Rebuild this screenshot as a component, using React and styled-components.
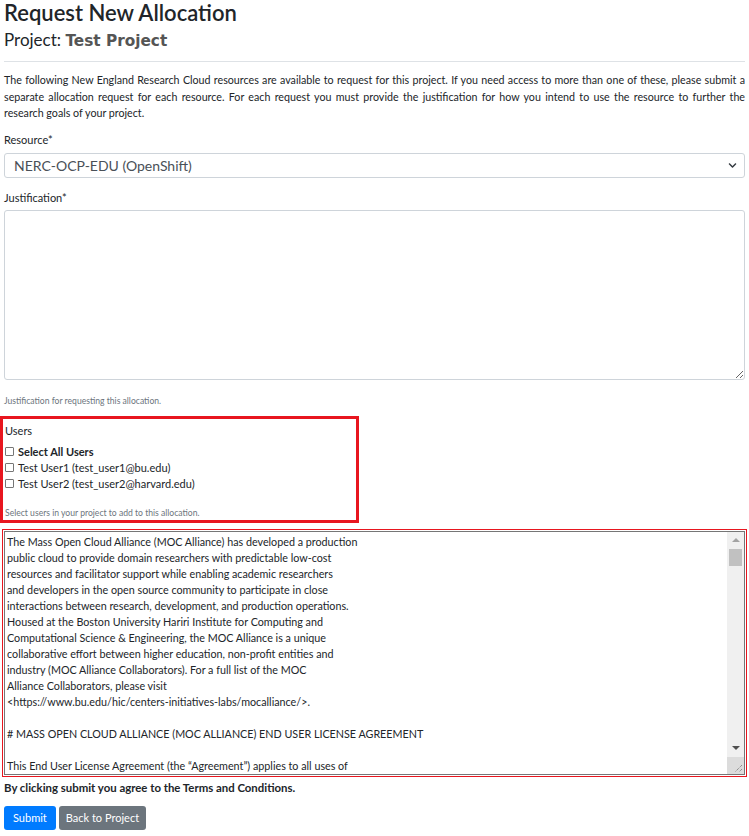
import React from 'react';
import styled, { createGlobalStyle } from 'styled-components';
import { FaChevronDown } from 'react-icons/fa';

const GlobalStyle = createGlobalStyle`
  html, body {
    margin: 0;
    padding: 0;
    background: #fff;
  }
  body {
    font-family: Lato, "Open Sans", sans-serif;
    color: #212529;
  }
`;

const Page = styled.div`
  padding: 0 4px 6px 4px;
  font-size: 11px;
`;

const Title = styled.h1`
  margin: 0;
  font-size: 22px;
  font-weight: 600;
  line-height: 26px;
`;

const SubTitle = styled.h2`
  margin: 3px 0 0 0;
  font-size: 17px;
  font-weight: 400;
  line-height: 22px;
`;

const ProjectName = styled.span`
  font-family: "DejaVu Sans", Verdana, sans-serif;
  font-size: 15.3px;
  color: #555;
  font-weight: 600;
`;

const Rule = styled.hr`
  margin: 9px 0 10px 0;
  border: 0;
  border-top: 1px solid #dee2e6;
`;

const Intro = styled.p`
  margin: 0;
  font-size: 10.7px;
  line-height: 16.5px;
  text-align: justify;
`;

const Label = styled.div`
  font-size: 11px;
  line-height: 16px;
  margin: ${p => p.$mt || 0}px 0 ${p => p.$mb ?? 5}px 0;
`;

const SelectWrap = styled.div`
  position: relative;
`;

const Select = styled.select`
  appearance: none;
  display: block;
  width: 100%;
  height: 25px;
  border: 1px solid #ced4da;
  border-radius: 3px;
  background: #fff;
  color: #495057;
  font-family: inherit;
  font-size: 14px;
  padding: 0 9px;
`;

const Chevron = styled.span`
  position: absolute;
  right: 8px;
  top: 8px;
  color: #343a40;
  font-size: 9px;
  pointer-events: none;
  display: flex;
`;

const Justification = styled.textarea`
  display: block;
  box-sizing: border-box;
  width: 100%;
  height: 170px;
  border: 1px solid #ced4da;
  border-radius: 3px;
  font-family: inherit;
  font-size: 12px;
  resize: vertical;
`;

const Help = styled.div`
  font-size: 8.6px;
  color: #6c757d;
  line-height: 12px;
  margin-top: ${p => p.$mt || 0}px;
`;

const UsersBox = styled.div`
  margin: 9px 0 0 -4px;
  width: 359px;
  box-sizing: border-box;
  border: 3px solid #e8161f;
  padding: 4px 4px 1px 2px;
`;

const CheckRow = styled.label`
  display: flex;
  align-items: center;
  gap: 4px;
  height: 16px;
  font-size: 11px;
  font-weight: ${p => (p.$bold ? 700 : 400)};
`;

const Check = styled.input.attrs({ type: 'checkbox' })`
  appearance: none;
  margin: 0;
  width: 9px;
  height: 9px;
  border: 1px solid #767676;
  border-radius: 1px;
  background: #fff;
`;

const AgreementFrame = styled.div`
  margin: 6px -2px 0 -2px;
  border: 1px solid #e8161f;
  padding: 1px;
`;

const AgreementBox = styled.div`
  position: relative;
  border: 1px solid #767676;
  height: 244px;
  box-sizing: border-box;
`;

const Agreement = styled.textarea`
  display: block;
  box-sizing: border-box;
  width: 100%;
  height: 100%;
  border: 0;
  margin: 0;
  padding: 2px 20px 2px 2px;
  font-family: inherit;
  font-size: 10.75px;
  line-height: 16px;
  color: #212529;
  resize: none;
  overflow-y: scroll;
  overflow-x: hidden;
  white-space: pre;
  scrollbar-width: none;
  outline: none;

  &::-webkit-scrollbar {
    display: none;
  }
`;

const ScrollBar = styled.div`
  position: absolute;
  top: 0;
  right: 0;
  bottom: 0;
  width: 17px;
  background: #f0f0f0;
  display: flex;
  flex-direction: column;
  pointer-events: none;
`;

const ArrowButton = styled.div`
  height: 17px;
  display: flex;
  align-items: center;
  justify-content: center;
`;

const Triangle = styled.span`
  width: 0;
  height: 0;
  border-left: 4px solid transparent;
  border-right: 4px solid transparent;
  ${p =>
    p.$dir === 'up'
      ? `border-bottom: 4px solid ${p.$color};`
      : `border-top: 4px solid ${p.$color};`}
`;

const Track = styled.div`
  flex: 1;
  padding: 0 2px;
`;

const Thumb = styled.div`
  height: 17px;
  background: #c1c1c1;
`;

const Corner = styled.div`
  height: 17px;
  background: #dcdcdc;
  display: flex;
  align-items: flex-end;
  justify-content: flex-end;
`;

const Terms = styled.div`
  margin-top: 3px;
  font-size: 11.4px;
  font-weight: 700;
  line-height: 16px;
`;

const Actions = styled.div`
  display: flex;
  gap: 3px;
  margin-top: 10px;
`;

const Button = styled.button`
  height: 24px;
  padding: 0 ${p => (p.$variant === 'secondary' ? 7 : 9)}px;
  border: 0;
  border-radius: 3px;
  font-family: inherit;
  font-size: 11px;
  color: #fff;
  background: ${p => (p.$variant === 'secondary' ? '#6c757d' : '#007bff')};
`;

const licenseHead = `The Mass Open Cloud Alliance (MOC Alliance) has developed a production
public cloud to provide domain researchers with predictable low-cost
resources and facilitator support while enabling academic researchers
and developers in the open source community to participate in close
interactions between research, development, and production operations.
Housed at the Boston University Hariri Institute for Computing and
Computational Science & Engineering, the MOC Alliance is a unique
collaborative effort between higher education, non-profit entities and
industry (MOC Alliance Collaborators). For a full list of the MOC
Alliance Collaborators, please visit
<https://www.bu.edu/hic/centers-initiatives-labs/mocalliance/>.

# MASS OPEN CLOUD ALLIANCE (MOC ALLIANCE) END USER LICENSE AGREEMENT

This End User License Agreement (the “Agreement”) applies to all uses of
the MOC Alliance production cloud services and resources (the
“Services”) by you (“User”). By accessing or using the Services, User
agrees to be bound by the terms of this Agreement.
`;

const licenseSections = [
  'ELIGIBILITY',
  'ACCEPTABLE USE',
  'ACCOUNTS AND SECURITY',
  'DATA AND PRIVACY',
  'RESOURCE ALLOCATIONS',
  'INTELLECTUAL PROPERTY',
  'DISCLAIMER OF WARRANTIES',
  'LIMITATION OF LIABILITY',
  'TERMINATION',
  'CHANGES TO THIS AGREEMENT',
  'GOVERNING LAW',
  'CONTACT',
];

const licenseText =
  licenseHead +
  licenseSections
    .map(
      (name, i) => `
## ${i + 1}. ${name}

User shall use the Services only in accordance with this Agreement and
all applicable laws, regulations and institutional policies. The MOC
Alliance may update the policies governing the Services from time to
time, and continued use of the Services after any such update
constitutes acceptance of the revised policies. User is responsible for
all activity that occurs under User's account and for ensuring that any
collaborators added to an allocation also comply with this Agreement.
`
    )
    .join('');

export default function App() {
  return (
    <Page>
      <GlobalStyle />
      <Title>Request New Allocation</Title>
      <SubTitle>
        Project: <ProjectName>Test Project</ProjectName>
      </SubTitle>
      <Rule />
      <Intro>
        The following New England Research Cloud resources are available to request for this
        project. If you need access to more than one of these, please submit a separate
        allocation request for each resource. For each request you must provide the
        justification for how you intend to use the resource to further the research goals of
        your project.
      </Intro>

      <Label $mt={10} $mb={5}>Resource*</Label>
      <SelectWrap>
        <Select defaultValue="nerc-ocp-edu">
          <option value="nerc-ocp-edu">NERC-OCP-EDU (OpenShift)</option>
        </Select>
        <Chevron>
          <FaChevronDown />
        </Chevron>
      </SelectWrap>

      <Label $mt={12} $mb={4}>Justification*</Label>
      <Justification />
      <Help $mt={15}>Justification for requesting this allocation.</Help>

      <UsersBox>
        <Label>Users</Label>
        <CheckRow $bold>
          <Check />
          Select All Users
        </CheckRow>
        <CheckRow>
          <Check />
          Test User1 (test_user1@bu.edu)
        </CheckRow>
        <CheckRow>
          <Check />
          Test User2 (test_user2@harvard.edu)
        </CheckRow>
        <Help $mt={15}>Select users in your project to add to this allocation.</Help>
      </UsersBox>

      <AgreementFrame>
        <AgreementBox>
          <Agreement readOnly defaultValue={licenseText} />
          <ScrollBar>
            <ArrowButton>
              <Triangle $dir="up" $color="#a3a3a3" />
            </ArrowButton>
            <Track>
              <Thumb />
            </Track>
            <ArrowButton>
              <Triangle $dir="down" $color="#505050" />
            </ArrowButton>
            <Corner>
              <svg width="17" height="17" viewBox="0 0 17 17">
                <path d="M15 8 L8 15 M15 12 L12 15" stroke="#6e6e6e" strokeWidth="1" strokeDasharray="1 1" />
              </svg>
            </Corner>
          </ScrollBar>
        </AgreementBox>
      </AgreementFrame>

      <Terms>By clicking submit you agree to the Terms and Conditions.</Terms>
      <Actions>
        <Button>Submit</Button>
        <Button $variant="secondary">Back to Project</Button>
      </Actions>
    </Page>
  );
}
